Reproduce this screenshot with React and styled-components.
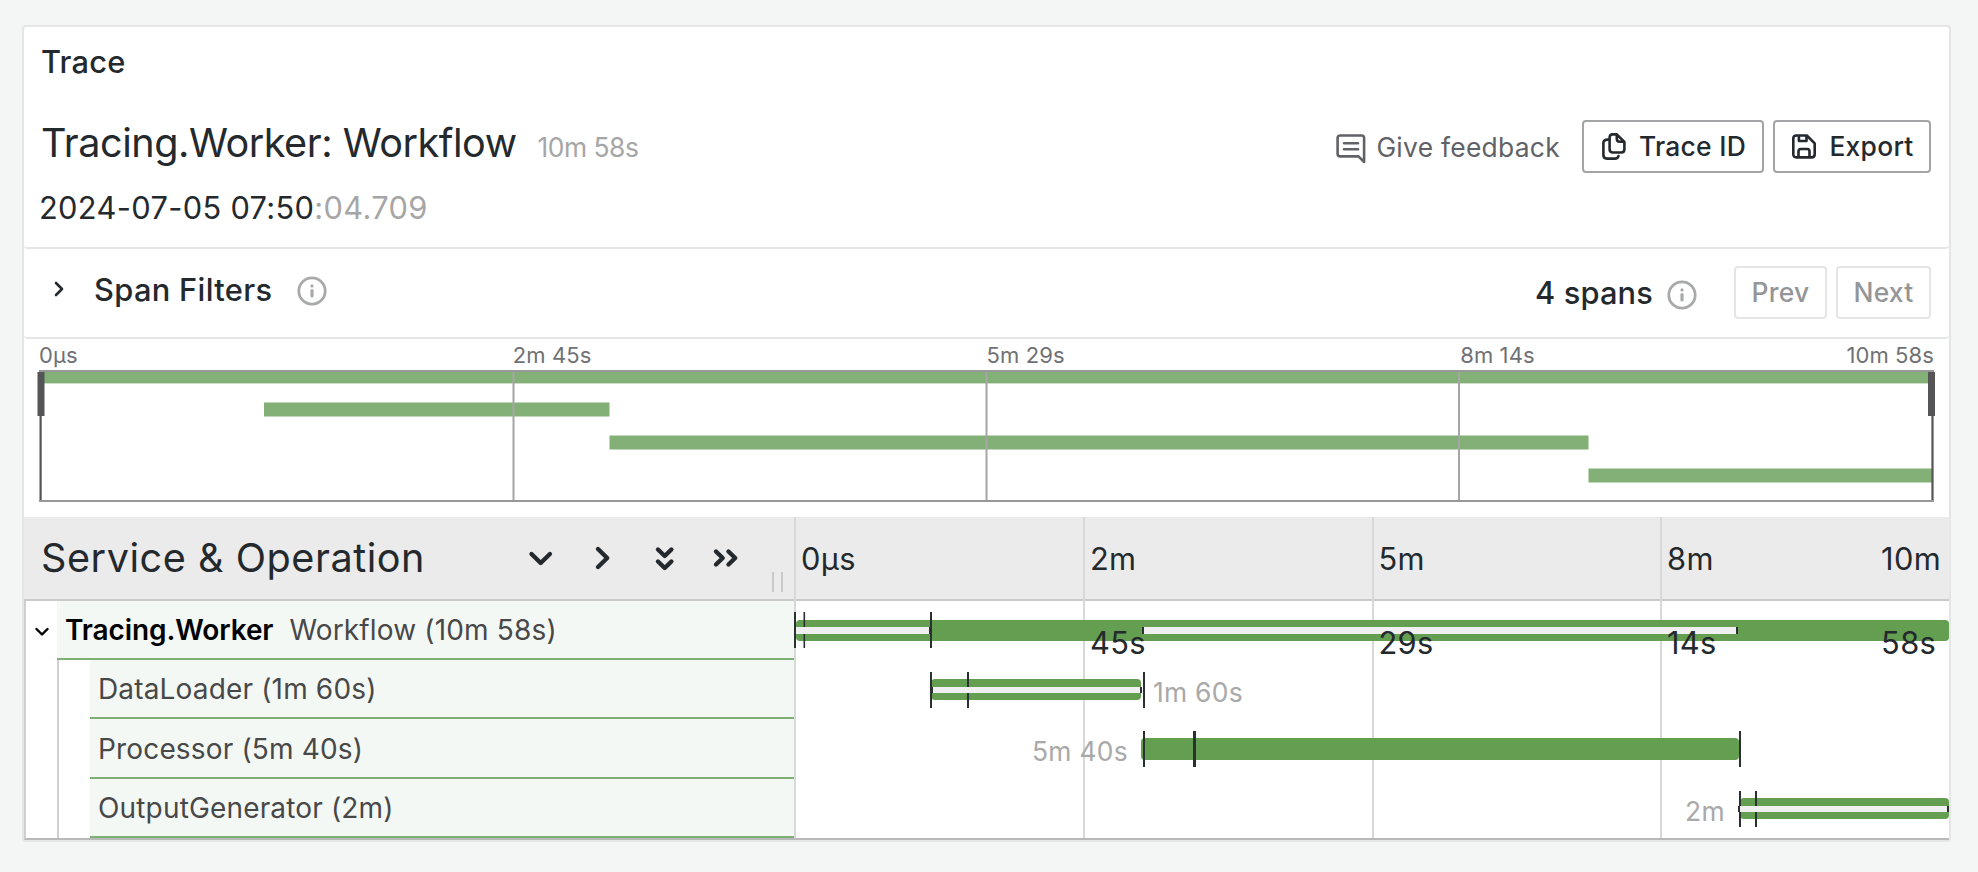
import React from "react";
import styled, { createGlobalStyle, css } from "styled-components";

const Global = createGlobalStyle`
  * { box-sizing: border-box; }
  body { margin: 0; background: #f4f5f5; font-family: Inter, "Liberation Sans", sans-serif; color: #24292e; }
`;

const Page = styled.main`
  height: 872px;
  padding: 25px 27px 30px 22px;
  background: #f4f5f5;
`;
const Panel = styled.section`
  height: 817px;
  background: #fff;
  border: 2px solid #e4e5e5;
  border-radius: 4px;
  display: flex;
  flex-direction: column;
`;
const PanelTitle = styled.h2`
  margin: 0;
  height: 70px;
  padding: 0 17px;
  font-size: 30.8px;
  font-weight: 500;
  line-height: 70px;
  letter-spacing: 0.2px;
`;
const TraceHeader = styled.header`
  height: 152px;
  padding: 0 18px 0 15px;
  display: flex;
  justify-content: space-between;
  border-bottom: 2px solid #e4e5e5;
  border-radius: 0 0 4px 4px;
`;
const TitleBlock = styled.div`
  display: flex;
  flex-direction: column;
`;
const TitleRow = styled.div`
  display: flex;
  align-items: baseline;
  height: 79px;
  line-height: 92px;
  gap: 21px;
`;
const TraceName = styled.h1`
  margin: 0;
  padding-left: 2px;
  font-size: 39.6px;
  font-weight: 400;
  letter-spacing: -0.47px;
`;
const Duration = styled.span`
  font-size: 26.4px;
  letter-spacing: -0.5px;
  color: #a6a6a7;
`;
const Timestamp = styled.div`
  font-size: 30.8px;
  line-height: 64px;
  letter-spacing: 0.01071em;
  span { color: #a6a6a7; }
`;
const Actions = styled.div`
  display: flex;
  align-items: center;
  height: 53px;
  margin-top: 23px;
`;
const Feedback = styled.a`
  display: flex;
  align-items: center;
  gap: 10px;
  margin-right: 22px;
  color: #606266;
  font-size: 26.4px;
  letter-spacing: 0.01071em;
  svg { margin-top: 4px; }
`;
const Button = styled.button`
  width: ${(p) => p.$w}px;
  height: 53px;
  margin: 0 0 0 ${(p) => p.$gap || 0}px;
  padding: 0 0 1px ${(p) => (p.disabled ? 0 : 2)}px;
  display: flex;
  align-items: center;
  justify-content: center;
  gap: 13px;
  font: 500 26.4px Inter, sans-serif;
  letter-spacing: 0.01071em;
  color: #24292e;
  background: #fff;
  border: 2px solid #a3a4a5;
  border-radius: 4px;
  ${(p) => p.disabled && css`color: #949597; border-color: #e4e5e5;`}
`;
const FilterBar = styled.div`
  height: 90px;
  padding: 0 18px 1px 27px;
  display: flex;
  align-items: center;
  border-bottom: 2px solid #e4e5e5;
  border-radius: 0 0 4px 4px;
  font-size: 30.8px;
  font-weight: 500;
`;
const FilterTitle = styled.div`
  display: flex;
  align-items: center;
  gap: 25px;
  flex: 1;
  margin-top: -7px;
  > svg:last-child { margin-top: 4px; }
`;
const FilterLabel = styled.span`
  margin-left: 2px;
  letter-spacing: 0.33px;
`;
const SpanCount = styled.div`
  display: flex;
  align-items: center;
  gap: 14px;
  margin-right: 37px;
  letter-spacing: 0.15px;
  svg { margin-top: 5px; }
`;

const Overview = styled.div`
  height: 178px;
  padding: 0 15px;
`;
const OverviewTicks = styled.div`
  height: 31px;
  display: grid;
  grid-template-columns: repeat(4, 1fr);
  font-size: 22px;
  line-height: 33px;
  letter-spacing: 0.1px;
  color: #707174;
`;
const OverviewTick = styled.span`
  display: flex;
  justify-content: space-between;
`;
const OverviewChart = styled.svg`
  display: block;
  overflow: visible;
`;

const Timeline = styled.div`
  position: relative;
  flex: 1;
  display: flex;
  flex-direction: column;
`;
const HeaderRow = styled.div`
  height: 84px;
  display: flex;
  background: #ebebeb;
  border-bottom: 2px solid #cacaca;
`;
const NameHeader = styled.div`
  width: 770px;
  display: flex;
  align-items: center;
  padding: 0 8px 0 17px;
`;
const NameTitle = styled.h3`
  margin: 0;
  width: 486px;
  font-size: 39.6px;
  font-weight: 400;
  letter-spacing: 0.55px;
`;
const Collapsers = styled.div`
  display: flex;
  flex: 1;
`;
const Grip = styled.div`
  align-self: flex-end;
  width: 11px;
  height: 20px;
  margin: 0 3px 7px 0;
  border: solid #c9c9c9;
  border-width: 0 2px;
`;
const Grid = styled.div`
  position: absolute;
  inset: 0 0 2px 770px;
  display: grid;
  grid-template-columns: 289px 288.5px 288.5px 1fr;
  pointer-events: none;
`;
const GridColumn = styled.div`
  border-left: 2px solid #d8d8d9;
`;
const TickLayer = styled(Grid)`
  z-index: 3;
`;
const TickCell = styled.div`
  padding: 0 8px 0 7px;
  display: flex;
  justify-content: space-between;
  font-size: 30.8px;
  line-height: 84px;
  letter-spacing: 0.01071em;
`;
const TickLabel = styled.span`
  width: min-content;
`;
const Rows = styled.div`
  height: 239px;
  display: grid;
  grid-template-rows: 59px 59px 60px 59px;
  border-left: 2px solid #cfcfcf;
  border-bottom: 2px solid #b9b9b9;
`;
const Row = styled.div`
  display: flex;
`;
const Toggle = styled.div`
  width: 31px;
  padding-top: 3px;
  display: flex;
  align-items: center;
  justify-content: center;
`;
const Indent = styled.div`
  width: 33px;
  border-left: 2px solid #cfcfcf;
`;
const NameCell = styled.div`
  flex: 0 0 ${(p) => (p.$child ? 704 : 737)}px;
  padding: ${(p) => (p.$child ? 1 : 0)}px 8px 0;
  display: flex;
  align-items: center;
  gap: 16px;
  background: #f4f8f5;
  border-bottom: 2px solid #7eb073;
  color: #484848;
  font-size: 28px;
  letter-spacing: 0.16px;
  b { color: #000; font-weight: 600; letter-spacing: -0.1px; }
`;
const SpanView = styled.svg`
  position: relative;
  z-index: 2;
  flex: none;
  overflow: visible;
  text {
    font: 26.4px Inter, sans-serif;
    letter-spacing: 0.01071em;
    fill: #a9a9a9;
  }
`;

const Stroke = ({ w, h, box, sw, children }) => (
  <svg width={w} height={h} viewBox={box} fill="none" stroke="currentColor" strokeWidth={sw} strokeLinecap="round" strokeLinejoin="round">
    {children}
  </svg>
);
const InfoIcon = () => (
  <Stroke w={30} h={30} box="0 0 30 30" sw={2.8}>
    <g stroke="#a8a9aa">
      <circle cx="15" cy="15" r="13.2" />
      <path d="M15 14.500v5.500M15 9.900v.1" strokeWidth="3.200" />
    </g>
  </Stroke>
);
const FeedbackIcon = () => (
  <Stroke w={30} h={30} box="0 0 30 30" sw={2.6}>
    <path d="M4 1.500h21.500q2.600 0 2.600 2.600v23.900l-5.600-5.600H4.200q-2.600 0-2.600-2.600V4.100q0-2.600 2.600-2.600zM8 9.300h14M8 15.200h14" />
  </Stroke>
);
const CopyIcon = () => (
  <Stroke w={24} h={27} box="0 0 24 27" sw={2.6}>
    <path d="M10.500 1.400h4.300l7.600 7.600v7.300q0 3.200-3.200 3.200h-8.400q-3.200 0-3.200-3.200V4.600q0-3.200 2.900-3.200zM14.800 1.800v4q0 3 3 3h4.400M5.800 6.600Q1.400 6.600 1.400 10v12q0 3.600 3.600 3.600h7.800q3.200 0 3.700-2.600" />
  </Stroke>
);
const SaveIcon = () => (
  <Stroke w={24} h={25} box="0 0 24 25" sw={2.6}>
    <path d="M4.400 1.500h10.400l7.900 7.900v10.900q0 3.100-3.100 3.100H4.400q-3.100 0-3.100-3.100V4.600q0-3.100 3.100-3.100zM6.900 2v5h7.600V2M6.500 23v-5.600q0-2.400 2.400-2.400h6.200q2.400 0 2.400 2.400v5.600" />
  </Stroke>
);

const SPANS = [
  {
    service: "Tracing.Worker", name: "Workflow (10m 58s)", h: 59,
    bar: [796, 1949, 19, 21], ticks: [[794, 2], [803.5, 1.6], [930, 2]], tickY: 11,
    paths: [[796, 930], [1144, 1737]], pathY: 26, pathH: 7, ends: [929, 1142, 1736],
  },
  {
    name: "DataLoader (1m 60s)", h: 59, label: ["1m 60s", 1153, 42],
    bar: [931, 1141, 19, 21], ticks: [[930, 2], [967, 2], [1143, 2]], tickY: 12,
    paths: [[933, 1141]], pathY: 27, pathH: 6, ends: [931, 1140],
  },
  {
    name: "Processor (5m 40s)", h: 60, label: ["5m 40s", 1032, 42],
    bar: [1141, 1739, 19, 22], ticks: [[1143, 2], [1193, 3], [1739, 2]], tickY: 12,
    paths: [], ends: [],
  },
  {
    name: "OutputGenerator (2m)", h: 59, label: ["2m", 1685, 42],
    bar: [1740, 1949, 19, 21], ticks: [[1739, 2], [1755, 2]], tickY: 12,
    paths: [[1740, 1948]], pathY: 27, pathH: 6, ends: [1738, 1947],
  },
];

function SpanRow({ span, root }) {
  const o = 794;
  const [x1, x2, y, h] = span.bar;
  return (
    <Row>
      <Toggle>
        {root && (
          <Stroke w={14} h={10} box="0 0 14 10" sw={2.4}>
            <path d="M1.500 2L7 7.500 12.500 2" stroke="#000" />
          </Stroke>
        )}
      </Toggle>
      {!root && <Indent />}
      <NameCell $child={!root}>
        {root && <b>{span.service}</b>}
        <span>{span.name}</span>
      </NameCell>
      <SpanView width={1155} height={span.h}>
        <rect x={x1 - o} y={y} width={x2 - x1} height={h} rx="4" fill="#649e50" />
        {span.ticks.map(([x, w]) => (
          <rect key={x} x={x - o} y={span.tickY} width={w} height="36" fill="#2b3033" />
        ))}
        {span.ends.map((x) => (
          <rect key={x} x={x - o} y={span.pathY} width="2" height={span.pathH} fill="#2b3033" />
        ))}
        {span.paths.map(([a, b]) => (
          <rect key={a} x={a - o} y={span.pathY} width={b - a - 1} height={span.pathH} fill="#f1f0f1" />
        ))}
        {span.label && <text x={span.label[1] - o} y={span.label[2]}>{span.label[0]}</text>}
      </SpanView>
    </Row>
  );
}

export default function App() {
  return (
    <Page>
      <Global />
      <Panel>
        <PanelTitle>Trace</PanelTitle>
        <TraceHeader>
          <TitleBlock>
            <TitleRow>
              <TraceName>Tracing.Worker: Workflow</TraceName>
              <Duration>10m 58s</Duration>
            </TitleRow>
            <Timestamp>2024-07-05 07:50<span>:04.709</span></Timestamp>
          </TitleBlock>
          <Actions>
            <Feedback><FeedbackIcon />Give feedback</Feedback>
            <Button $w={182}><CopyIcon />Trace ID</Button>
            <Button $w={158} $gap={9}><SaveIcon />Export</Button>
          </Actions>
        </TraceHeader>
        <FilterBar>
          <FilterTitle>
            <Stroke w={16} h={18} box="0 0 16 18" sw={2.6}>
              <path d="M5 3l6 6-6 6" />
            </Stroke>
            <FilterLabel>Span Filters</FilterLabel>
            <InfoIcon />
          </FilterTitle>
          <SpanCount>4 spans<InfoIcon /></SpanCount>
          <Button $w={93} disabled>Prev</Button>
          <Button $w={95} $gap={9} disabled>Next</Button>
        </FilterBar>
        <Overview>
          <OverviewTicks>
            <OverviewTick>0µs</OverviewTick>
            <OverviewTick>2m 45s</OverviewTick>
            <OverviewTick>5m 29s</OverviewTick>
            <OverviewTick><span>8m 14s</span><span>10m 58s</span></OverviewTick>
          </OverviewTicks>
          <OverviewChart width="1895" height="132">
            <g fill="#82b077">
              <rect x="3" y="2" width="1890" height="11.4" />
              <rect x="225" y="32.5" width="345.5" height="14" />
              <rect x="570.5" y="65.5" width="979" height="14" />
              <rect x="1549.5" y="98.5" width="344" height="14" />
            </g>
            <g fill="#a5a5a6">
              <rect x="473.5" y="2" width="2" height="129" />
              <rect x="946.5" y="2" width="2" height="129" />
              <rect x="1419" y="2" width="2" height="129" />
            </g>
            <g fill="#98989a">
              <rect x="0" y="0" width="1895" height="2" />
              <rect x="0" y="130" width="1895" height="2" />
            </g>
            <g fill="#555557">
              <rect x="0.5" y="2" width="2.2" height="128" />
              <rect x="1892.4" y="2" width="2.2" height="128" />
              <rect x="-1.5" y="2" width="7" height="44" />
              <rect x="1889" y="2" width="7" height="44" />
            </g>
          </OverviewChart>
        </Overview>
        <Timeline>
          <HeaderRow>
            <NameHeader>
              <NameTitle>Service &amp; Operation</NameTitle>
              <Collapsers>
                <svg width="230" height="32" fill="none" stroke="#24292e" strokeWidth="4.4" strokeLinecap="round" strokeLinejoin="round">
                  <path d="M4.500 12l9.200 9 9.200-9M71 7l9.200 9-9.200 9M131 7.500l6.700 6.500 6.700-6.500M131 19.500l6.700 6.500 6.700-6.500M189 9.500l6.700 6.500-6.700 6.500M201.500 9.500l6.700 6.500-6.700 6.500" />
                </svg>
              </Collapsers>
              <Grip />
            </NameHeader>
          </HeaderRow>
          <Grid>
            <GridColumn /><GridColumn /><GridColumn /><GridColumn />
          </Grid>
          <Rows>
            {SPANS.map((s, i) => <SpanRow key={s.name} span={s} root={i === 0} />)}
          </Rows>
          <TickLayer>
            <TickCell><TickLabel>0µs</TickLabel></TickCell>
            <TickCell><TickLabel>2m 45s</TickLabel></TickCell>
            <TickCell><TickLabel>5m 29s</TickLabel></TickCell>
            <TickCell><TickLabel>8m 14s</TickLabel><TickLabel>10m 58s</TickLabel></TickCell>
          </TickLayer>
        </Timeline>
      </Panel>
    </Page>
  );
}
